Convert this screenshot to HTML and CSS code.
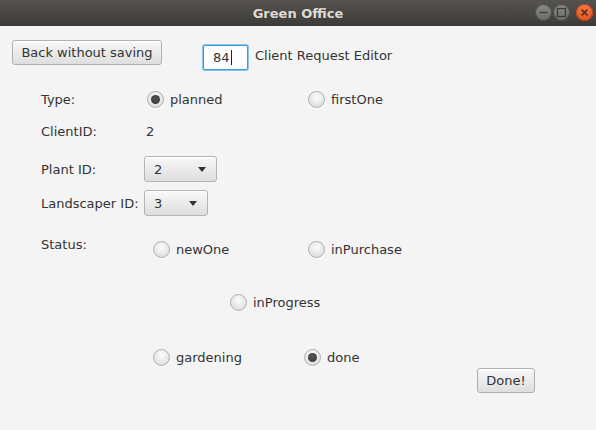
FILE: index.html
```html
<!DOCTYPE html>
<html>
<head>
<meta charset="utf-8">
<link rel="stylesheet" href="styles.css">
</head>
<body>
<div class="window">
  <header class="titlebar">
    <span class="title">Green Office</span>
    <div class="controls">
      <span class="wbtn"><svg width="17" height="17" viewBox="0 0 17 17"><line x1="4.5" y1="8.5" x2="12.5" y2="8.5" stroke="#3a3935" stroke-width="1.3"/></svg></span>
      <span class="wbtn"><svg width="17" height="17" viewBox="0 0 17 17"><rect x="4.5" y="4.5" width="8" height="8" fill="none" stroke="#3a3935" stroke-width="1.2"/></svg></span>
      <span class="wbtn close"><svg width="17" height="17" viewBox="0 0 17 17"><path d="M5.5 5.5 L11.5 11.5 M11.5 5.5 L5.5 11.5" stroke="#3a2a22" stroke-width="1.4"/></svg></span>
    </div>
  </header>
  <main class="pane">
    <div class="toprow">
      <button class="btn back">Back without saving</button>
      <div class="field">84<span class="caret"></span></div>
      <span class="heading">Client Request Editor</span>
    </div>
    <div class="row type-row">
      <span class="label">Type:</span>
      <label class="radio sel"><span class="dot"></span>planned</label>
      <label class="radio"><span class="dot"></span>firstOne</label>
    </div>
    <div class="row client-row">
      <span class="label">ClientID:</span>
      <span class="value">2</span>
    </div>
    <div class="row plant-row">
      <span class="label">Plant ID:</span>
      <div class="combo plant"><span>2</span><span class="arrow"></span></div>
    </div>
    <div class="row land-row">
      <span class="label">Landscaper ID:</span>
      <div class="combo land"><span>3</span><span class="arrow"></span></div>
    </div>
    <div class="row status-row">
      <span class="label">Status:</span>
      <label class="radio"><span class="dot"></span>newOne</label>
      <label class="radio"><span class="dot"></span>inPurchase</label>
    </div>
    <div class="row progress-row">
      <label class="radio"><span class="dot"></span>inProgress</label>
    </div>
    <div class="row garden-row">
      <label class="radio"><span class="dot"></span>gardening</label>
      <label class="radio sel"><span class="dot"></span>done</label>
    </div>
    <div class="donerow">
      <button class="btn done">Done!</button>
    </div>
  </main>
</div>
</body>
</html>
```
FILE: styles.css
```css
* { box-sizing: border-box; }
html, body { margin: 0; padding: 0; }
body {
  width: 596px;
  height: 430px;
  overflow: hidden;
  font-family: "DejaVu Sans", "Noto Sans", sans-serif;
  font-size: 13px;
  color: #333333;
  background: #f4f4f4;
}
.window { width: 596px; height: 430px; display: flex; flex-direction: column; }
.titlebar {
  height: 26px;
  flex: none;
  position: relative;
  display: flex;
  align-items: center;
  justify-content: center;
  background: linear-gradient(#55534e, #3c3b37);
}
.title {
  color: #dfdbd2;
  font-weight: bold;
  font-size: 13px;
  font-family: "DejaVu Sans", sans-serif;
}
.controls {
  position: absolute;
  right: 3px;
  top: 4px;
  display: flex;
  gap: 1px;
}
.wbtn {
  width: 17px;
  height: 17px;
  border-radius: 50%;
  background: linear-gradient(#8a8984, #6d6c67);
  box-shadow: inset 0 0 0 1px #4a4945;
  display: block;
}
.wbtn svg { display: block; }
.wbtn.close {
  margin-left: 5px;
  background: linear-gradient(#f77a4a, #e25620);
  box-shadow: inset 0 0 0 1px #b8431a;
}
.pane { flex: 1; display: flex; flex-direction: column; }
.toprow {
  display: flex;
  align-items: flex-start;
  padding: 14px 0 0 12px;
  height: 44px;
}
.btn {
  font-family: inherit;
  font-size: 13px;
  color: #333;
  height: 25px;
  padding: 0 8px;
  border: 1px solid #b0b0b0;
  border-radius: 3px;
  background: linear-gradient(#f8f8f8, #dedede);
  box-shadow: inset 0 1px 0 #ffffff;
  display: flex;
  align-items: center;
  justify-content: center;
}
.back { width: 150px; }
.field {
  margin: 5px 0 0 41px;
  width: 45px;
  height: 25px;
  border: 1px solid #3c9bd8;
  box-shadow: 0 0 0 1px #8ac3ea;
  border-radius: 2px;
  background: #fff;
  padding-left: 9px;
  display: flex;
  align-items: center;
}
.caret { width: 1px; height: 15px; background: #222; margin-left: 1px; }
.heading { margin: 8px 0 0 7px; }
.row { display: flex; align-items: center; height: 20px; padding-left: 41px; }
.label { display: block; }
.radio { display: flex; align-items: center; gap: 6px; }
.dot {
  width: 17px;
  height: 17px;
  border-radius: 50%;
  border: 1px solid #aeaeae;
  background: radial-gradient(circle at 50% 35%, #fcfcfc, #dedede 80%);
  box-shadow: 0 1px 0 #ffffff;
  display: flex;
  align-items: center;
  justify-content: center;
  flex: none;
}
.radio.sel .dot::after {
  content: "";
  width: 9px;
  height: 9px;
  border-radius: 50%;
  background: radial-gradient(circle at 50% 40%, #555, #333);
}
.type-row { margin-top: 19px; }
.type-row .label { width: 106px; }
.type-row .radio:first-of-type { width: 161px; }
.client-row { margin-top: 12px; }
.client-row .label { width: 105px; }
.plant-row { margin-top: 15px; height: 26px; }
.plant-row .label { width: 103px; }
.land-row { margin-top: 8px; height: 26px; }
.land-row .label { width: 103px; }
.combo {
  height: 26px;
  border: 1px solid #b4b4b4;
  border-radius: 3px;
  background: linear-gradient(#f8f8f8, #dedede);
  box-shadow: inset 0 1px 0 #fff;
  display: flex;
  align-items: center;
  justify-content: space-between;
  padding: 0 10px 0 9px;
}
.combo.plant { width: 73px; }
.combo.land { width: 64px; }
.arrow {
  width: 0;
  height: 0;
  border-left: 4px solid transparent;
  border-right: 4px solid transparent;
  border-top: 5px solid #333;
}
.status-row { margin-top: 23px; }
.status-row .label { width: 112px; align-self: flex-start; margin-top: -2px; }
.status-row .radio:nth-of-type(1) { width: 155px; }
.progress-row { margin-top: 33px; padding-left: 230px; }
.garden-row { margin-top: 35px; padding-left: 153px; }
.garden-row .radio:first-of-type { width: 151px; }
.donerow { display: flex; padding-left: 477px; margin-top: 1px; }
.done { width: 58px; }
```
